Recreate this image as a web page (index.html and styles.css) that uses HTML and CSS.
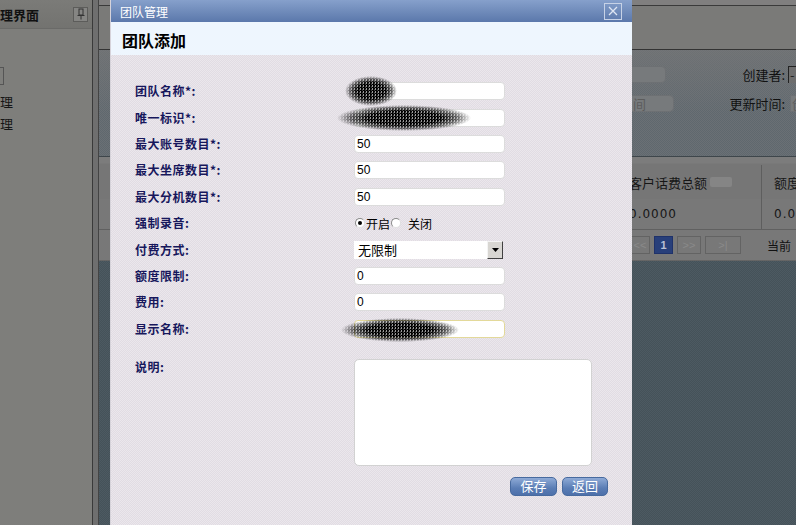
FILE: index.html
```html
<!DOCTYPE html>
<html>
<head>
    <meta charset="UTF-8">
    <title>团队管理</title>
    <link rel="stylesheet" href="styles.css">
</head>
<body>
    <div class="app">
        <!-- left navigation panel -->
        <aside class="side">
            <div class="side-head">
                <span class="side-title">理界面</span>
                <span class="pin">
                    <svg width="12" height="12" viewBox="0 0 12 12">
                        <rect x="4" y="1" width="4" height="6" fill="none" stroke="#333" stroke-width="1"/>
                        <line x1="2.5" y1="7.5" x2="9.5" y2="7.5" stroke="#333" stroke-width="1"/>
                        <line x1="6" y1="8" x2="6" y2="11.5" stroke="#333" stroke-width="1"/>
                    </svg>
                </span>
            </div>
            <div class="side-body">
                <div class="side-tab"></div>
                <div class="side-item">理</div>
                <div class="side-item">理</div>
            </div>
        </aside>
        <div class="splitter"></div>

        <!-- main content, dimmed behind the dialog -->
        <main class="main">
            <div class="main-top"></div>
            <div class="filter">
                <div class="filter-row">
                    <span class="fake-input w1"></span>
                    <label class="filter-label">创建者:</label>
                    <span class="fake-input edge dark">-</span>
                </div>
                <div class="filter-row">
                    <span class="fake-input w2">间</span>
                    <label class="filter-label">更新时间:</label>
                    <span class="fake-input edge far">创</span>
                </div>
            </div>
            <div class="grid">
                <div class="grid-head">
                    <div class="col c0"></div>
                    <div class="col c1">客户话费总额<span class="sort"></span></div>
                    <div class="col c2">额度</div>
                </div>
                <div class="grid-row">
                    <div class="col c0"></div>
                    <div class="col c1">0.0000</div>
                    <div class="col c2">0.00</div>
                </div>
                <div class="pager">
                    <span class="pg first">&lt;&lt;</span>
                    <span class="pg current">1</span>
                    <span class="pg next">&gt;&gt;</span>
                    <span class="pg last">&gt;|</span>
                    <span class="pg-text">当前</span>
                </div>
            </div>
            <div class="main-rest"></div>
        </main>
    </div>

    <!-- Dialog: 团队管理 -->
    <div class="dialog">
        <div class="dialog-title">
            <span>团队管理</span>
            <span class="close">
                <svg width="12" height="12" viewBox="0 0 12 12">
                    <path d="M2 2 L10 10 M10 2 L2 10" stroke="#dfe6f3" stroke-width="1.3"/>
                </svg>
            </span>
        </div>
        <div class="dialog-head">团队添加</div>
        <div class="dialog-body">
            <div class="form">
                <div class="label">团队名称*:</div>
                <div class="field">
                    <span class="input"></span>
                    <span class="scribble s1"></span>
                </div>

                <div class="label">唯一标识*:</div>
                <div class="field">
                    <span class="input"></span>
                    <span class="scribble s2"></span>
                </div>

                <div class="label">最大账号数目*:</div>
                <div class="field"><span class="input">50</span></div>

                <div class="label">最大坐席数目*:</div>
                <div class="field"><span class="input">50</span></div>

                <div class="label">最大分机数目*:</div>
                <div class="field"><span class="input">50</span></div>

                <div class="label">强制录音:</div>
                <div class="field radios">
                    <span class="radio checked"></span><span class="radio-text">开启</span>
                    <span class="radio"></span><span class="radio-text gap">关闭</span>
                </div>

                <div class="label">付费方式:</div>
                <div class="field">
                    <span class="select">
                        <span class="select-text">无限制</span>
                        <span class="select-arrow">
                            <svg width="7" height="4" viewBox="0 0 7 4"><path d="M0 0 H7 L3.5 4 Z" fill="#000"/></svg>
                        </span>
                    </span>
                </div>

                <div class="label">额度限制:</div>
                <div class="field"><span class="input">0</span></div>

                <div class="label">费用:</div>
                <div class="field"><span class="input">0</span></div>

                <div class="label">显示名称:</div>
                <div class="field">
                    <span class="input focus"></span>
                    <span class="scribble s3"></span>
                </div>
            </div>

            <div class="desc-row">
                <div class="label">说明:</div>
                <span class="textarea"></span>
            </div>

            <div class="buttons">
                <button class="btn save">保存</button>
                <button class="btn back">返回</button>
            </div>
        </div>
    </div>
</body>
</html>
```

FILE: styles.css
```css
body {
    margin: 0;
    width: 796px;
    height: 525px;
    overflow: hidden;
    position: relative;
    font-family: "Liberation Sans", "Noto Sans CJK SC", sans-serif;
    font-size: 12px;
    color: #161616;
    background-color: #4d5a62;
}
.app {
    display: flex;
    height: 525px;
}

/* left panel */
.side {
    width: 92px;
    flex: none;
    background-color: #7e7e7b;
    border-right: 1px solid #3a3a3a;
}
.side-head {
    height: 28px;
    display: flex;
    align-items: center;
    justify-content: space-between;
    padding-right: 4px;
    background: linear-gradient(#7b7b78, #737370);
    border-bottom: 1px solid #6a6a68;
}
.side-title {
    font-family: "Noto Sans CJK SC", sans-serif;
    font-weight: bold;
    font-size: 13px;
    color: #111;
}
.pin {
    width: 13px;
    height: 13px;
    border: 1px solid #5c5c5a;
    background-color: #858583;
    display: flex;
    align-items: center;
    justify-content: center;
}
.side-body {
    padding-top: 38px;
}
.side-tab {
    width: 3px;
    height: 16px;
    border: 1px solid #555;
    border-left: none;
    margin-bottom: 6px;
}
.side-item {
    font-family: "Noto Sans CJK SC", sans-serif;
    font-size: 13px;
    line-height: 22px;
}
.splitter {
    width: 5px;
    flex: none;
    background-color: #6f6f6f;
    border-right: 1px solid #444;
}

/* main content */
.main {
    flex: 1;
    display: flex;
    flex-direction: column;
    min-width: 0;
}
.main-top {
    height: 44px;
    background-color: #7a7a78;
    border-top: 5px solid #807f7f;
    border-bottom: 1px solid #333;
    box-shadow: inset 0 1px 0 #3a3a3a;
}
.filter {
    height: 107px;
    padding-top: 16px;
    box-sizing: border-box;
    background-color: #6b7075;
    background-image:
        linear-gradient(rgba(120,120,120,0.6), rgba(120,120,120,0) 60%),
        conic-gradient(#5f686e 25%, transparent 0 50%, #5f686e 0 75%, transparent 0);
    background-size: 100% 100%, 2px 2px;
    border-bottom: 1px solid #3e464b;
}
.filter-row {
    display: flex;
    align-items: center;
    height: 17px;
    margin-bottom: 12px;
    padding-left: 420px;
}
.fake-input {
    height: 17px;
    flex: none;
    border-radius: 5px;
    background-color: #777a7c;
    box-shadow: inset 0 0 0 1px #6d7073;
    color: #5c5c5c;
    font-family: "Noto Sans CJK SC", sans-serif;
    font-size: 13px;
    line-height: 17px;
    padding-left: 112px;
    box-sizing: border-box;
}
.fake-input.w1 {
    width: 147px;
}
.fake-input.w2 {
    width: 155px;
    padding-left: 114px;
}
.filter-label {
    flex: 1;
    text-align: right;
    font-family: "Noto Sans CJK SC", sans-serif;
    font-size: 13px;
    white-space: nowrap;
    color: #111;
}
.fake-input.edge {
    width: 40px;
    margin-left: 3px;
    margin-right: -32px;
    padding-left: 2px;
    border-radius: 0;
}
.fake-input.far {
    margin-left: 5px;
    margin-right: -34px;
}
.fake-input.dark {
    background-color: #6e6e6e;
    box-shadow: inset 1px 1px 0 #222;
    color: #222;
}
.grid {
    background-color: #787878;
}
.grid-head, .grid-row {
    display: flex;
    align-items: center;
    font-family: "Noto Sans CJK SC", sans-serif;
    white-space: nowrap;
}
.grid-head {
    height: 42px;
    font-size: 13px;
    padding-top: 8px;
    box-sizing: border-box;
    background: linear-gradient(#7c7c7c 0, #7c7c7c 6px, #767676 7px);
}
.grid-row {
    height: 30px;
    font-family: "DejaVu Sans", sans-serif;
    font-size: 12px;
    letter-spacing: 1px;
    border-bottom: 1px solid #606060;
}
.col {
    height: 100%;
    flex: none;
    display: flex;
    align-items: center;
    box-sizing: border-box;
}
.c0 {
    width: 528px;
}
.c1 {
    width: 135px;
    padding-left: 2px;
    border-right: 1px solid #5e5e5e;
}
.c2 {
    padding-left: 12px;
}
.sort {
    width: 22px;
    height: 10px;
    margin-left: 3px;
    border-radius: 2px;
    background-color: #858585;
}
.pager {
    height: 30px;
    display: flex;
    align-items: center;
    gap: 4px;
    padding-left: 531px;
    border-bottom: 1px solid #656565;
}
.pg {
    height: 18px;
    border: 1px solid #636363;
    box-sizing: border-box;
    color: #8a8a8a;
    font-size: 11px;
    line-height: 16px;
    text-align: center;
}
.pg.first { width: 20px; }
.pg.current {
    width: 19px;
    background-color: #283f7a;
    color: #b9c0d6;
    font-weight: bold;
    border-color: #1f326a;
}
.pg.next { width: 24px; }
.pg.last { width: 36px; }
.pg-text {
    margin-left: 22px;
    font-family: "Noto Sans CJK SC", sans-serif;
    font-size: 12px;
    color: #111;
}
.main-rest {
    flex: 1;
    background-color: #4d5a62;
    background-image: conic-gradient(#455259 25%, transparent 0 50%, #455259 0 75%, transparent 0);
    background-size: 2px 2px;
}

/* dialog */
.dialog {
    position: absolute;
    left: 110px;
    top: 0;
    width: 522px;
    height: 540px;
    display: flex;
    flex-direction: column;
    border-left: 1px solid #d6d3da;
    box-sizing: border-box;
}
.dialog-title {
    height: 22px;
    flex: none;
    display: flex;
    align-items: center;
    justify-content: space-between;
    padding: 0 10px 0 9px;
    background: linear-gradient(#86a0cb, #5b78ab);
    color: #fff;
    font-family: "Noto Sans CJK SC", sans-serif;
    font-size: 12px;
}
.close {
    width: 18px;
    height: 17px;
    border: 1px solid #c7d2e6;
    box-sizing: border-box;
    display: flex;
    align-items: center;
    justify-content: center;
}
.dialog-head {
    height: 33px;
    flex: none;
    padding-left: 11px;
    background-color: #eef6fe;
    font-family: "Noto Sans CJK SC", sans-serif;
    font-weight: bold;
    font-size: 16px;
    line-height: 36px;
    color: #000;
}
.dialog-body {
    flex: 1;
    padding: 23px 24px 0 24px;
    background-color: #ebe7ec;
    background-image: conic-gradient(#e1dce3 25%, transparent 0 50%, #e1dce3 0 75%, transparent 0);
    background-size: 2px 2px;
}
.form {
    display: grid;
    grid-template-columns: 219px 1fr;
    grid-auto-rows: 26.4px;
    align-items: center;
}
.label {
    font-family: "Noto Sans CJK SC", sans-serif;
    font-weight: bold;
    font-size: 12px;
    letter-spacing: 0.5px;
    line-height: 16px;
    color: #17175c;
}
.field {
    position: relative;
    display: flex;
    align-items: center;
}
.input {
    width: 151px;
    height: 18px;
    box-sizing: border-box;
    border: 1px solid #dcdcdc;
    border-radius: 4px;
    background-color: #fff;
    padding-left: 2px;
    font-size: 12px;
    line-height: 16px;
    color: #000;
}
.input.focus {
    border-color: #e3d99a;
}
.scribble {
    position: absolute;
    background: conic-gradient(#000 25%, #3a3a3a 0 50%, #000 0 75%, #9a9a9a 0);
    background-size: 3px 3px;
    -webkit-mask-image: radial-gradient(closest-side, #000 55%, rgba(0,0,0,0.6) 80%, transparent 100%);
    mask-image: radial-gradient(closest-side, #000 55%, rgba(0,0,0,0.6) 80%, transparent 100%);
}
.scribble.s1 { left: -9px; top: -6px; width: 52px; height: 30px; }
.scribble.s2 { left: -17px; top: -4px; width: 134px; height: 26px; }
.scribble.s3 { left: -13px; top: -2px; width: 118px; height: 24px; }
.radios {
    font-family: "Noto Sans CJK SC", sans-serif;
    font-size: 12px;
    color: #000;
}
.radio {
    width: 10px;
    height: 10px;
    box-sizing: border-box;
    border-radius: 50%;
    border: 1px solid #8a8a8a;
    border-right-color: #e0e0e0;
    border-bottom-color: #e0e0e0;
    background-color: #fff;
    margin-left: 1px;
    display: inline-flex;
    align-items: center;
    justify-content: center;
}
.radio.checked::after {
    content: "";
    width: 4px;
    height: 4px;
    border-radius: 50%;
    background-color: #000;
}
.radio-text {
    margin-left: 1px;
}
.radio-text.gap {
    margin-left: 7px;
}
.select {
    width: 149px;
    height: 18px;
    display: flex;
    align-items: center;
    justify-content: space-between;
    background-color: #fff;
}
.select-text {
    padding-left: 4px;
    font-family: "Noto Sans CJK SC", sans-serif;
    font-size: 13px;
    color: #000;
}
.select-arrow {
    width: 16px;
    height: 18px;
    box-sizing: border-box;
    background-color: #d8d6d2;
    border: 1px solid;
    border-color: #f4f4f4 #404040 #404040 #f4f4f4;
    display: flex;
    align-items: center;
    justify-content: center;
}
.desc-row {
    display: grid;
    grid-template-columns: 219px 1fr;
    margin-top: 17px;
}
.textarea {
    display: block;
    width: 238px;
    height: 107px;
    box-sizing: border-box;
    border: 1px solid #d2d2d2;
    border-radius: 5px;
    background-color: #fff;
}
.buttons {
    display: flex;
    justify-content: flex-end;
    gap: 5px;
    margin-top: 11px;
}
.btn {
    height: 19px;
    padding: 0;
    border: 1px solid #476a9f;
    border-radius: 5px;
    background: linear-gradient(#8eaad6, #5a7db5 60%, #4d70aa);
    color: #fff;
    font-family: "Noto Sans CJK SC", sans-serif;
    font-size: 13px;
    line-height: 16px;
    cursor: pointer;
}
.btn.save { width: 47px; }
.btn.back { width: 46px; }
```
